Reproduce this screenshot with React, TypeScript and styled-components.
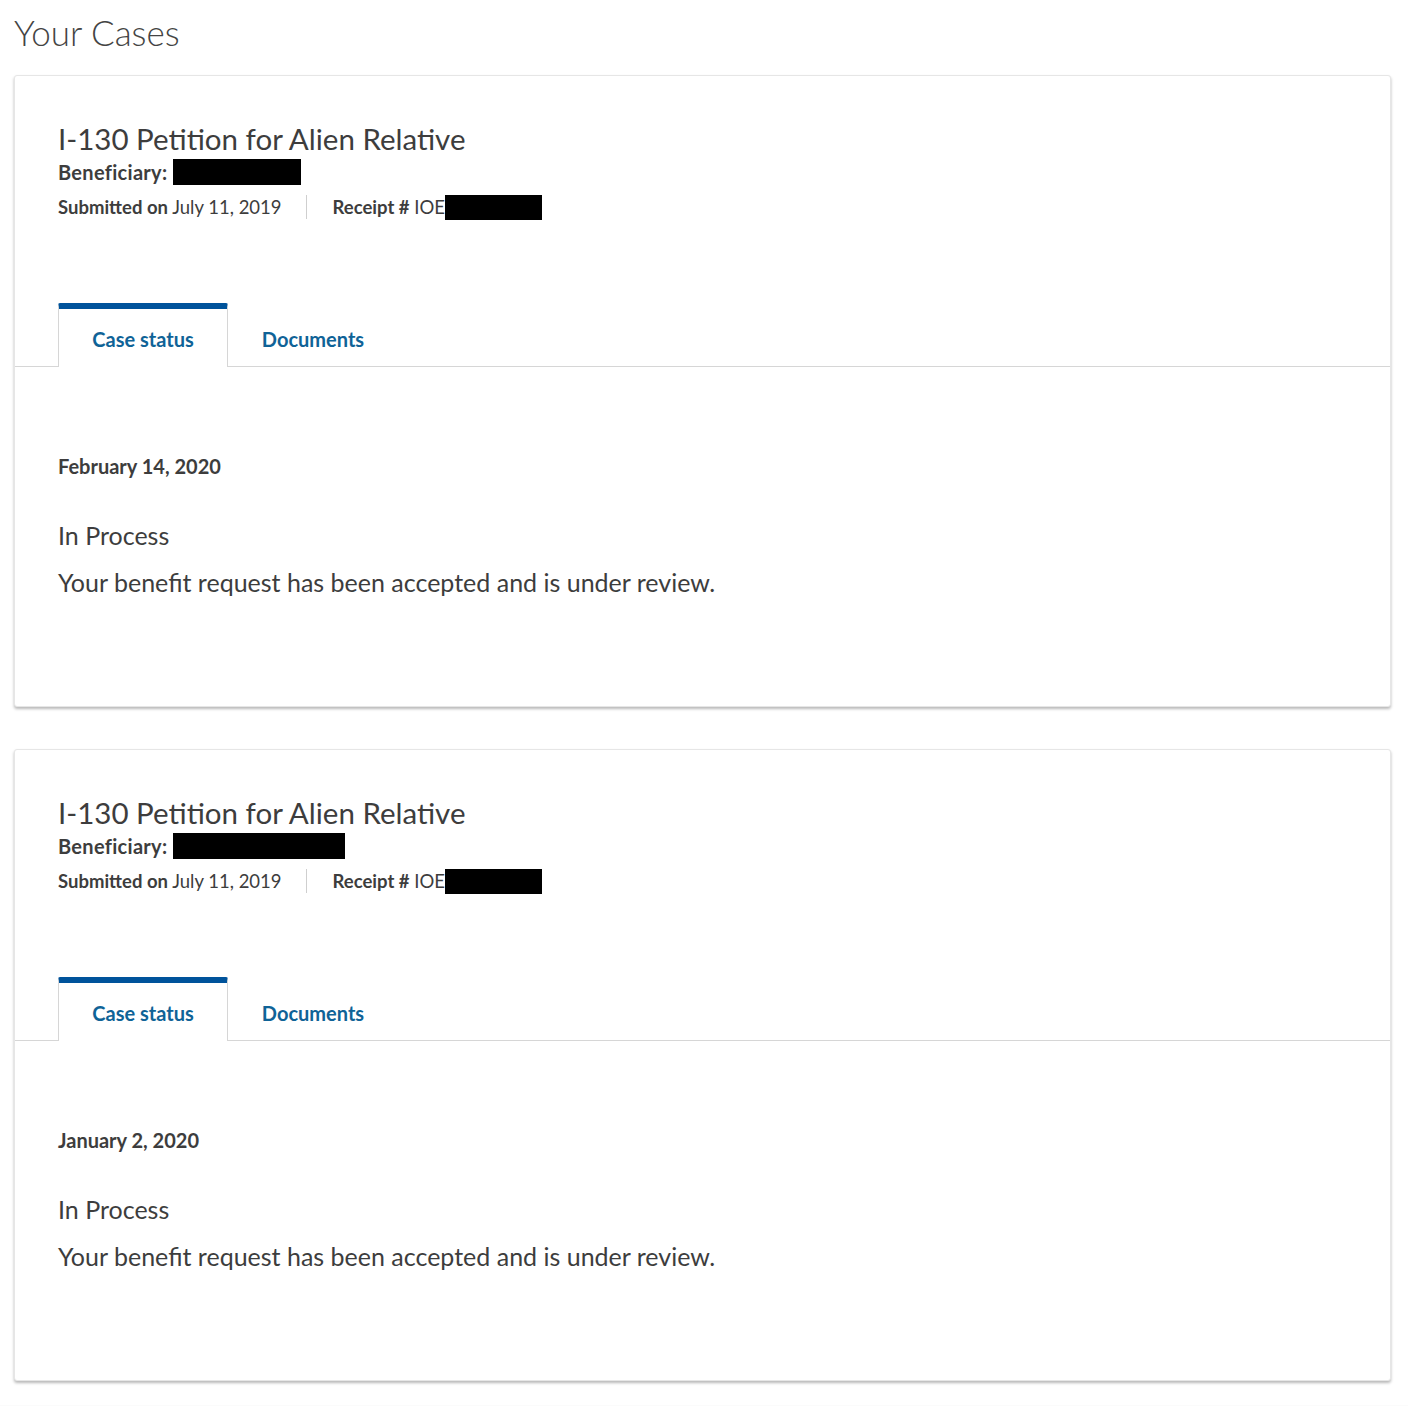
import React from 'react';
import styled, { createGlobalStyle } from 'styled-components';

const GlobalStyle = createGlobalStyle`
    html, body {
        margin: 0;
        padding: 0;
        background: #fbfbfb;
    }
    body {
        font-family: Lato, "Liberation Sans", sans-serif;
        color: #3d3d3d;
    }
`;

interface CaseItem {
    key: string;
    title: string;
    beneficiaryWidth: number;
    submitted: string;
    statusDate: string;
    status: string;
    description: string;
}

const cases: CaseItem[] = [
    {
        key: 'a',
        title: 'I-130 Petition for Alien Relative',
        beneficiaryWidth: 128,
        submitted: 'July 11, 2019',
        statusDate: 'February 14, 2020',
        status: 'In Process',
        description: 'Your benefit request has been accepted and is under review.',
    },
    {
        key: 'b',
        title: 'I-130 Petition for Alien Relative',
        beneficiaryWidth: 172,
        submitted: 'July 11, 2019',
        statusDate: 'January 2, 2020',
        status: 'In Process',
        description: 'Your benefit request has been accepted and is under review.',
    },
];

// One case card with header, tabs and the status panel
const CaseCard = ({ item }: { item: CaseItem }) => (
    <Card>
        <Header>
            <Title>{item.title}</Title>
            <BeneficiaryRow>
                <Label>Beneficiary:</Label>
                <Redacted $width={item.beneficiaryWidth} $height={26} />
            </BeneficiaryRow>
            <MetaRow>
                <MetaItem>
                    <Label>Submitted on</Label>
                    <span>{' ' + item.submitted}</span>
                </MetaItem>
                <Divider />
                <MetaItem>
                    <Label>Receipt #</Label>
                    <span>{' IOE'}</span>
                    <Redacted $width={97} $height={25} />
                </MetaItem>
            </MetaRow>
        </Header>

        <TabBar>
            <Tab $active>Case status</Tab>
            <Tab>Documents</Tab>
        </TabBar>

        <Panel>
            <StatusDate>{item.statusDate}</StatusDate>
            <StatusTitle>{item.status}</StatusTitle>
            <StatusText>{item.description}</StatusText>
        </Panel>
    </Card>
);

export default function App() {
    return (
        <>
            <GlobalStyle />
            <Page>
                <PageTitle>Your Cases</PageTitle>
                <CardList>
                    {cases.map(item => <CaseCard key={item.key} item={item} />)}
                </CardList>
            </Page>
        </>
    );
}

const Page = styled.div({
    background: '#fff',
    padding: '11px 17px 24px 14px',
});

const PageTitle = styled.h1({
    margin: 0,
    fontSize: 35,
    fontWeight: 300,
    lineHeight: '42px',
    color: '#444',
});

const CardList = styled.div({
    display: 'flex',
    flexDirection: 'column',
    gap: 42,
    marginTop: 22,
});

const Card = styled.section({
    background: '#fff',
    border: '1px solid #e6e6e6',
    borderRadius: 3,
    boxShadow: '0 2px 3px rgba(0,0,0,0.28)',
    height: 632,
    boxSizing: 'border-box',
});

const Header = styled.div({
    padding: '43px 43px 0',
});

const Title = styled.h2({
    margin: 0,
    fontSize: 29.5,
    fontWeight: 400,
    lineHeight: '40px',
    color: '#3d3d3d',
});

const Label = styled.span({
    fontWeight: 700,
});

const BeneficiaryRow = styled.div({
    display: 'flex',
    alignItems: 'center',
    gap: 6,
    fontSize: 20,
    letterSpacing: 0.3,
    height: 26,
});

const Redacted = styled.span({
    display: 'inline-block',
    background: '#000',
}, (p: { $width: number; $height: number }) => ({
    width: p.$width,
    height: p.$height,
}));

const MetaRow = styled.div({
    display: 'flex',
    alignItems: 'center',
    marginTop: 8,
    fontSize: 18.5,
    height: 26,
    paddingTop: 1,
});

const MetaItem = styled.span({
    display: 'flex',
    alignItems: 'center',
    whiteSpace: 'pre',
});

const Divider = styled.span({
    width: 1,
    height: 24,
    background: '#cfcfcf',
    margin: '0 26px 0 24px',
});

const TabBar = styled.div({
    display: 'flex',
    alignItems: 'flex-end',
    marginTop: 83,
    paddingLeft: 43,
    borderBottom: '1px solid #d6d6d6',
    height: 63,
});

const Tab = styled.div<{ $active?: boolean }>(p => ({
    width: 170,
    height: p.$active ? 64 : 63,
    boxSizing: 'border-box',
    display: 'flex',
    alignItems: 'center',
    justifyContent: 'center',
    fontSize: 20,
    fontWeight: 700,
    color: '#0f6397',
    background: '#fff',
    borderTop: p.$active ? '6px solid #00539b' : 'none',
    borderLeft: p.$active ? '1px solid #d6d6d6' : 'none',
    borderRight: p.$active ? '1px solid #d6d6d6' : 'none',
    borderRadius: p.$active ? '2px 2px 0 0' : 0,
    marginBottom: p.$active ? -1 : 0,
    paddingTop: p.$active ? 2 : 8,
}));

const Panel = styled.div({
    padding: '85px 43px 0',
});

const StatusDate = styled.div({
    fontSize: 20,
    fontWeight: 700,
    lineHeight: '28px',
});

const StatusTitle = styled.div({
    fontSize: 25,
    lineHeight: '32px',
    marginTop: 39,
});

const StatusText = styled.p({
    fontSize: 25,
    lineHeight: '32px',
    margin: '15px 0 0',
});
